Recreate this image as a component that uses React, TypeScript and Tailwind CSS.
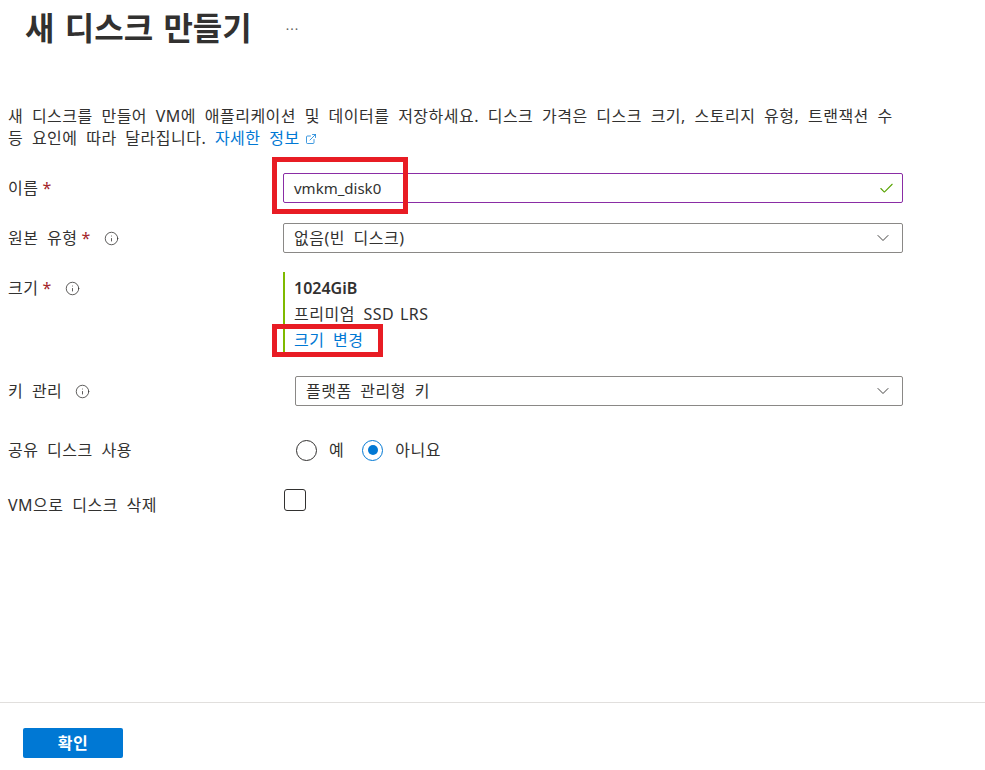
import { Check, ChevronDown, Info, ExternalLink } from "lucide-react";

const font = "font-['Noto_Sans','Noto_Sans_CJK_KR',sans-serif]";

function Req() {
  return <span className="ml-1 text-[#a4262c]">*</span>;
}

function Tip() {
  return <Info className="ml-[13px] inline-block text-[#323130]" size={15} strokeWidth={1.25} />;
}

function Label({ children }: { children: React.ReactNode }) {
  return <div className="flex w-[275px] shrink-0 items-center">{children}</div>;
}

function Select({ value, className = "" }: { value: string; className?: string }) {
  return (
    <div
      className={`flex h-[30px] items-center justify-between rounded-[2px] border border-[#8a8886] pl-[10px] pr-[9px] ${className}`}
    >
      <span>{value}</span>
      <ChevronDown size={20} strokeWidth={1.1} className="text-[#323130]" />
    </div>
  );
}

function Radio({ checked, label }: { checked?: boolean; label: string }) {
  return (
    <label className="flex items-center gap-[12px]">
      <span
        className={`flex h-[21px] w-[21px] items-center justify-center rounded-full border ${
          checked ? "border-[#0078d4]" : "border-[#323130]"
        }`}
      >
        {checked && <span className="h-[10px] w-[10px] rounded-full bg-[#0078d4]" />}
      </span>
      <span>{label}</span>
    </label>
  );
}

export default function App() {
  return (
    <div
      className={`flex h-[770px] w-[985px] flex-col bg-white text-[16px] tracking-[0.5px] text-[#323130] [word-spacing:4px] ${font}`}
    >
      <div className="flex-1 px-[8px]">
        <div className="flex items-center pl-[17px] pt-[8px]">
          <h1 className="text-[32px] font-semibold leading-[40px] tracking-normal [word-spacing:2px]">
            새 디스크 만들기
          </h1>
          <span className="ml-[34px] mt-[4px] text-[13px] tracking-[1px] text-[#605e5c]">···</span>
        </div>

        <p className="mt-[57px] leading-[22px]">
          새 디스크를 만들어 VM에 애플리케이션 및 데이터를 저장하세요. 디스크 가격은 디스크 크기, 스토리지 유형, 트랜잭션 수
          <br />
          등 요인에 따라 달라집니다.{" "}
          <a className="text-[#0078d4]">
            자세한 정보
            <ExternalLink className="ml-[5px] inline-block align-[-1px]" size={12} strokeWidth={1.5} />
          </a>
        </p>

        <div className="relative mt-[24px] flex w-[895px] flex-col">
          <div className="flex h-[30px]">
            <Label>
              이름
              <Req />
            </Label>
            <div className="flex flex-1 items-center justify-between rounded-[2px] border border-[#8a2da5] pl-[10px] pr-[7px]">
              <span className="text-[15px] tracking-normal">vmkm_disk0</span>
              <Check size={17} strokeWidth={1.5} className="text-[#57a300]" />
            </div>
          </div>

          <div className="mt-[20px] flex h-[30px]">
            <Label>
              원본 유형
              <Req />
              <Tip />
            </Label>
            <Select value="없음(빈 디스크)" className="flex-1" />
          </div>

          <div className="mt-[19px] flex">
            <div className="mt-[3px] flex h-[26px] w-[275px] shrink-0 items-center self-start">
              크기
              <Req />
              <Tip />
            </div>
            <div className="flex flex-col border-l-2 border-[#7fba00] py-[3px] pl-[9px] leading-[26px]">
              <span className="font-semibold tracking-normal">1024GiB</span>
              <span>
                프리미엄 <span className="[word-spacing:1px]">SSD LRS</span>
              </span>
              <a className="text-[#0078d4]">크기 변경</a>
            </div>
          </div>

          <div className="mt-[20px] flex h-[30px]">
            <Label>
              키 관리
              <Tip />
            </Label>
            <Select value="플랫폼 관리형 키" className="ml-[12px] flex-1" />
          </div>

          <div className="mt-[29px] flex h-[30px]">
            <Label>공유 디스크 사용</Label>
            <div className="flex items-center gap-[18px] pl-[13px]">
              <Radio label="예" />
              <Radio checked label="아니요" />
            </div>
          </div>

          <div className="mt-[24px] flex">
            <div className="w-[275px] shrink-0 pt-[5px] leading-[22px]">VM으로 디스크 삭제</div>
            <div className="ml-[1px] h-[22px] w-[22px] rounded-[3px] border border-[#323130]" />
          </div>

          <div className="pointer-events-none absolute left-[264px] top-[-16px] h-[57px] w-[136px] border-[5px] border-[#e81c24]" />
          <div className="pointer-events-none absolute left-[264px] top-[151px] h-[33px] w-[111px] border-[5px] border-[#e81c24]" />
        </div>
      </div>

      <div className="h-[68px] border-t border-[#e1dfdd] pl-[23px] pt-[25px]">
        <button className="h-[30px] w-[100px] rounded-[2px] bg-[#0078d4] text-[16px] font-semibold text-white">
          확인
        </button>
      </div>
    </div>
  );
}
